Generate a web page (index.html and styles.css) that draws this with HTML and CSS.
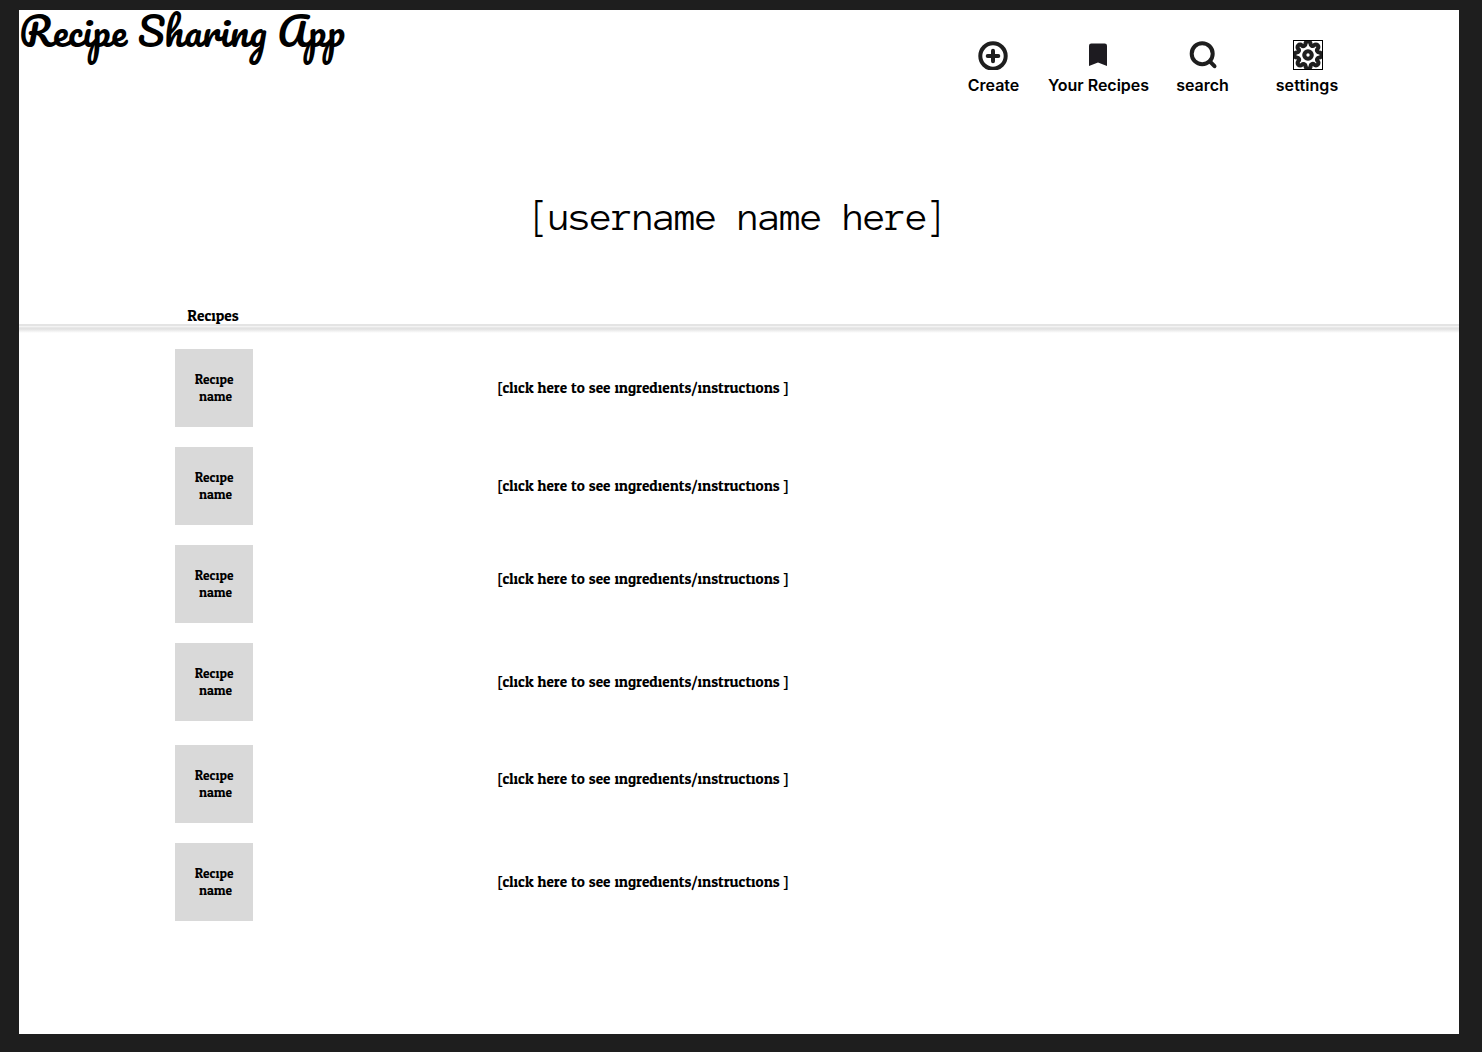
FILE: index.html
```html
<!DOCTYPE html>
<html lang="en">
<head>
<meta charset="utf-8">
<title>Recipe Sharing App</title>
<link rel="stylesheet" href="styles.css">
</head>
<body>
<div class="page">
  <header class="header">
    <h1 class="brand">Recipe Sharing App</h1>
    <nav class="nav">
      <a class="nav-item create">
        <svg class="icon" viewBox="0 0 30 30"><circle cx="15" cy="16" r="12.700" fill="none" stroke="#1e1e1e" stroke-width="4"/><path d="M15 10.700v10.600M9.700 16h10.600" stroke="#1e1e1e" stroke-width="4" stroke-linecap="round"/></svg>
        <span>Create</span>
      </a>
      <a class="nav-item saved">
        <svg class="icon" viewBox="0 0 30 30"><path d="M6 26V5.800Q6 3.500 8.300 3.500H21.700Q24 3.500 24 5.800V26L15 22.500Z" fill="#1d1b20"/></svg>
        <span>Your Recipes</span>
      </a>
      <a class="nav-item search">
        <svg class="icon" viewBox="0 0 30 30"><circle cx="14.200" cy="13.700" r="10.500" fill="none" stroke="#1e1e1e" stroke-width="4"/><path d="M21.800 21.300l4.700 4.900" stroke="#1e1e1e" stroke-width="4" stroke-linecap="round"/></svg>
        <span>search</span>
      </a>
      <a class="nav-item settings">
        <svg class="icon" viewBox="0 0 24 24" fill="none" stroke="#1e1e1e" stroke-width="3.300" stroke-linejoin="round"><circle cx="12" cy="12" r="3"/><path d="M19.400 15a1.650 1.650 0 0 0 .33 1.820l.06.06a2 2 0 0 1-2.830 2.830l-.06-.06a1.650 1.650 0 0 0-1.820-.33 1.650 1.650 0 0 0-1 1.510V21a2 2 0 0 1-4 0v-.09A1.650 1.650 0 0 0 9 19.400a1.650 1.650 0 0 0-1.820.33l-.06.06a2 2 0 0 1-2.830-2.830l.06-.06A1.650 1.650 0 0 0 4.680 15a1.650 1.650 0 0 0-1.510-1H3a2 2 0 0 1 0-4h.09A1.650 1.650 0 0 0 4.600 9a1.650 1.650 0 0 0-.33-1.820l-.06-.06a2 2 0 0 1 2.830-2.830l.06.06A1.650 1.650 0 0 0 9 4.680a1.650 1.650 0 0 0 1-1.510V3a2 2 0 0 1 4 0v.09a1.650 1.650 0 0 0 1 1.510 1.650 1.650 0 0 0 1.820-.33l.06-.06a2 2 0 0 1 2.830 2.830l-.06.06A1.650 1.650 0 0 0 19.400 9a1.650 1.650 0 0 0 1.510 1H21a2 2 0 0 1 0 4h-.09a1.650 1.650 0 0 0-1.510 1z"/><rect x=".4" y=".4" width="23.200" height="23.200" stroke="#000" stroke-width=".8" stroke-linejoin="miter"/></svg>
        <span>settings</span>
      </a>
    </nav>
  </header>
  <h2 class="username">[username name here]</h2>
  <div class="section-title">Recipes</div>
  <div class="divider"></div>
  <main class="recipes">
    <div class="recipe"><div class="tile"><span>Recipe</span><span class="second">name</span></div><a class="link">[click here to see ingredients/instructions ]</a></div>
    <div class="recipe"><div class="tile"><span>Recipe</span><span class="second">name</span></div><a class="link">[click here to see ingredients/instructions ]</a></div>
    <div class="recipe"><div class="tile"><span>Recipe</span><span class="second">name</span></div><a class="link raised">[click here to see ingredients/instructions ]</a></div>
    <div class="recipe"><div class="tile"><span>Recipe</span><span class="second">name</span></div><a class="link">[click here to see ingredients/instructions ]</a></div>
    <div class="recipe spaced"><div class="tile"><span>Recipe</span><span class="second">name</span></div><a class="link raised">[click here to see ingredients/instructions ]</a></div>
    <div class="recipe"><div class="tile"><span>Recipe</span><span class="second">name</span></div><a class="link">[click here to see ingredients/instructions ]</a></div>
  </main>
</div>
</body>
</html>
```

FILE: styles.css
```css
* { box-sizing: border-box; }
body {
  margin: 0;
  padding: 10px 23px 18px 19px;
  height: 1052px;
  background: #1e1e1e;
  color: #000;
}
.page { height: 1024px; background: #fff; }
.header {
  display: flex;
  justify-content: space-between;
  height: 170px;
}
.brand {
  margin: 0;
  font: 400 39.2px/42px Pacifico, cursive;
  white-space: nowrap;
}
.nav {
  display: flex;
  padding: 30px 91px 0 0;
  font: 600 16px/20px Inter, sans-serif;
}
.nav-item {
  display: flex;
  flex-direction: column;
  align-items: center;
  gap: 5px;
  white-space: nowrap;
}
.create { width: 90px; }
.create span, .saved span { padding-left: 1px; }
.saved { width: 120px; }
.search { width: 90px; }
.search span { padding-right: 1px; }
.settings { width: 120px; letter-spacing: 0.1px; }
.settings span { padding-right: 2px; }
.icon { width: 30px; height: 30px; }
.username {
  margin: 0;
  height: 120px;
  padding-left: 509px;
  font: 400 40px/75px "Anonymous Pro", "Liberation Mono", monospace;
  letter-spacing: -0.8px;
}
.section-title {
  height: 24px;
  padding-left: 168.3px;
  font: 400 15.4px/32px "Odor Mean Chey", "DejaVu Serif", serif;
}
.divider {
  height: 9px;
  background: linear-gradient(#e4e4e4 0 2px, #f3f3f3 2px 3px, #e8e8e8 3px 4px, #e2e2e2 4px 5px, #e9e9e9 6px, #fff 9px);
}
.recipes {
  display: flex;
  flex-direction: column;
  gap: 20px;
  padding: 16px 0 0 156px;
}
.recipe { display: flex; height: 78px; gap: 244.5px; }
.spaced { margin-top: 4px; }
.tile {
  display: flex;
  flex-direction: column;
  align-items: center;
  justify-content: center;
  width: 78px;
  padding-top: 2px;
  background: #d9d9d9;
  font: 400 13.4px/17px "Odor Mean Chey", "DejaVu Serif", serif;
}
.second { padding-left: 3px; }
.link {
  display: flex;
  align-items: center;
  font: 400 15.27px/20px "Odor Mean Chey", "DejaVu Serif", serif;
  white-space: pre;
}
.raised { padding-bottom: 10px; }
```
